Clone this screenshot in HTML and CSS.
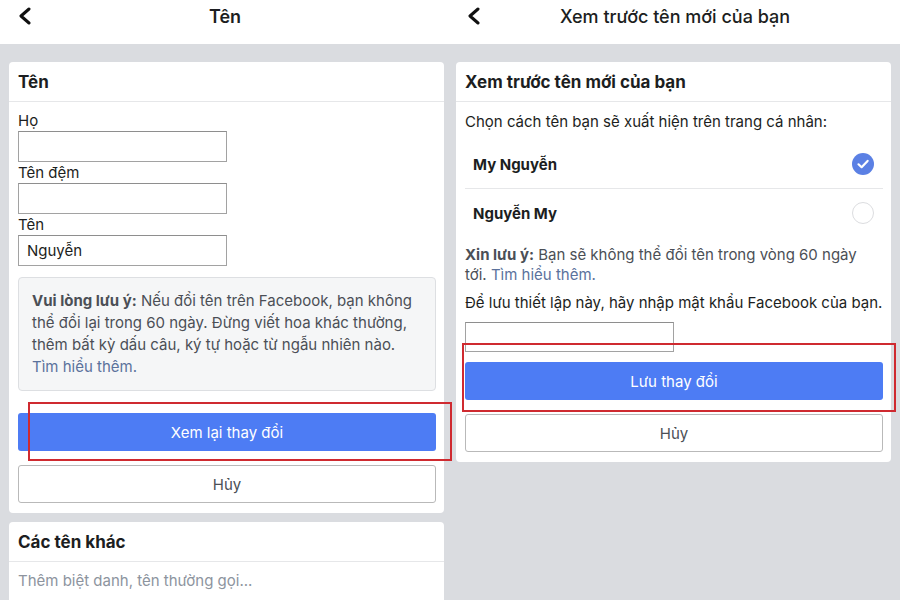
FILE: index.html
```html
<!DOCTYPE html>
<html lang="vi">
  <head>
    <meta charset="UTF-8" />
    <meta name="viewport" content="width=device-width, initial-scale=1.0" />
    <title>Đổi tên</title>
    <link rel="stylesheet" href="styles.css">
  </head>
  <body>
    <!-- màn hình 1: sửa tên -->
    <div class="screen screen-left">
      <div class="topbar">
        <svg class="back" width="14" height="18" viewBox="0 0 14 18"><path d="M11 2 L3 9 L11 16" fill="none" stroke="#111" stroke-width="3" stroke-linecap="round" stroke-linejoin="round"/></svg>
        <div class="title">Tên</div>
      </div>
      <div class="content">
        <div class="card">
          <div class="card-header">Tên</div>
          <div class="card-body">
            <label class="field-label">Họ</label>
            <input class="field" type="text" value="">
            <label class="field-label">Tên đệm</label>
            <input class="field" type="text" value="">
            <label class="field-label">Tên</label>
            <input class="field" type="text" value="Nguyễn">

            <div class="note">
              <strong>Vui lòng lưu ý:</strong> Nếu đổi tên trên Facebook, bạn không<br>
              thể đổi lại trong 60 ngày. Đừng viết hoa khác thường,<br>
              thêm bất kỳ dấu câu, ký tự hoặc từ ngẫu nhiên nào.<br>
              <a href="#" class="link">Tìm hiểu thêm.</a>
            </div>

            <button class="btn btn-primary btn-review">Xem lại thay đổi</button>
            <button class="btn btn-cancel">Hủy</button>
          </div>
        </div>

        <div class="card card-other">
          <div class="card-header">Các tên khác</div>
          <div class="placeholder">Thêm biệt danh, tên thường gọi...</div>
        </div>
      </div>
    </div>

    <!-- màn hình 2: xem trước -->
    <div class="screen screen-right">
      <div class="topbar">
        <svg class="back" width="14" height="18" viewBox="0 0 14 18"><path d="M11 2 L3 9 L11 16" fill="none" stroke="#111" stroke-width="3" stroke-linecap="round" stroke-linejoin="round"/></svg>
        <div class="title title-light">Xem trước tên mới của bạn</div>
      </div>
      <div class="content">
        <div class="card">
          <div class="card-header">Xem trước tên mới của bạn</div>
          <div class="card-body">
            <div class="intro">Chọn cách tên bạn sẽ xuất hiện trên trang cá nhân:</div>
            <div class="option option-first">
              <span>My Nguyễn</span>
              <svg class="radio" width="22" height="22" viewBox="0 0 22 22"><circle cx="11" cy="11" r="11" fill="#5b80e4"/><path d="M6.5 11.3 L9.6 14.2 L15.6 7.9" fill="none" stroke="#fff" stroke-width="2.2" stroke-linecap="round" stroke-linejoin="round"/></svg>
            </div>
            <div class="option option-last">
              <span>Nguyễn My</span>
              <span class="radio radio-empty"></span>
            </div>
            <div class="hint">
              <strong>Xin lưu ý:</strong> Bạn sẽ không thể đổi tên trong vòng 60 ngày<br>
              tới. <a href="#" class="link">Tìm hiểu thêm.</a>
            </div>
            <div class="intro pw-label">Để lưu thiết lập này, hãy nhập mật khẩu Facebook của bạn.</div>
            <input class="field field-pw" type="password" value="">
            <button class="btn btn-primary btn-save">Lưu thay đổi</button>
            <button class="btn btn-cancel">Hủy</button>
          </div>
        </div>
      </div>
    </div>

    <!-- khung đỏ đánh dấu -->
    <div class="mark mark-left"></div>
    <div class="mark mark-right"></div>
  </body>
</html>
```

FILE: styles.css
```css
body {
  font-family: Inter, Roboto, 'Noto Sans', sans-serif;
  background-color: #dadce0;
  margin: 0;
  width: 900px;
  height: 600px;
  overflow: hidden;
  display: flex;
  color: #1c1e21;
  position: relative;
}
.screen {
  width: 450px;
  display: flex;
  flex-direction: column;
}
.topbar {
  height: 44px;
  flex-shrink: 0;
  background-color: white;
  display: flex;
  align-items: center;
  justify-content: center;
  position: relative;
}
.back {
  position: absolute;
  left: 18px;
  top: 7px;
}
.screen-right .back {
  left: 17px;
}
.title {
  font-size: 18px;
  font-weight: 600;
  margin-top: -12px;
}
.title-light {
  font-weight: 500;
}
.content {
  padding-top: 18px;
}
.screen-left .content {
  padding-left: 9px;
  padding-right: 6px;
}
.screen-right .content {
  padding-left: 6px;
  padding-right: 9px;
}
.card {
  background-color: white;
  border-radius: 4px;
}
.card-header {
  height: 39px;
  line-height: 41px;
  padding: 0 9px;
  font-size: 17px;
  font-weight: 700;
  border-bottom: 1px solid #e6e7e9;
}
.card-body {
  padding: 8px 8px 10px 9px;
  display: flex;
  flex-direction: column;
}
.field-label {
  font-size: 15px;
  line-height: 21px;
  color: #1c1e21;
}
.field {
  width: 209px;
  height: 31px;
  box-sizing: border-box;
  border: 1px solid #a2a2a2;
  border-top-color: #8e8e8e;
  border-radius: 0;
  padding: 0 8px;
  font-family: inherit;
  font-size: 15px;
  color: #1c1e21;
  margin: 0;
}
.note {
  margin-top: 11px;
  background-color: #f5f6f7;
  border: 1px solid #dddfe2;
  border-radius: 4px;
  padding: 12px 13px;
  font-size: 15px;
  line-height: 22px;
  color: #4b4f56;
  white-space: nowrap;
}
.note strong,
.hint strong {
  color: #4b4f56;
}
.link {
  color: #5b729c;
  text-decoration: none;
}
.btn {
  width: 100%;
  height: 38px;
  border-radius: 3px;
  font-family: inherit;
  font-size: 15px;
  cursor: pointer;
}
.btn-primary {
  background-color: #4d7cf4;
  border: none;
  color: white;
}
.btn-review {
  margin-top: 22px;
}
.btn-cancel {
  margin-top: 14px;
  background-color: white;
  border: 1px solid #b9b9b9;
  color: #4b4f56;
}
.card-other {
  margin-top: 9px;
  height: 90px;
}
.placeholder {
  padding: 0 9px;
  line-height: 38px;
  font-size: 15px;
  color: #8d949e;
}
.intro {
  font-size: 15px;
  line-height: 20px;
  padding-top: 2px;
  white-space: nowrap;
}
.option {
  height: 48px;
  display: flex;
  align-items: center;
  justify-content: space-between;
  padding: 0 9px 0 8px;
  font-size: 15px;
  font-weight: 700;
  border-bottom: 1px solid #e6e7e9;
}
.option-first {
  margin-top: 8px;
}
.option-last {
  border-bottom: none;
}
.radio {
  display: block;
  width: 22px;
  height: 22px;
}
.radio-empty {
  box-sizing: border-box;
  border: 1px solid #dcdde0;
  border-radius: 50%;
}
.hint {
  margin-top: 8px;
  font-size: 15px;
  line-height: 20px;
  color: #4b4f56;
  white-space: nowrap;
}
.pw-label {
  margin-top: 6px;
}
.field-pw {
  margin-top: 9px;
  height: 30px;
}
.btn-save {
  margin-top: 10px;
}
.mark {
  position: absolute;
  border: 2px solid #cf2a30;
  box-sizing: border-box;
}
.mark-left {
  left: 28px;
  top: 402px;
  width: 424px;
  height: 59px;
}
.mark-right {
  left: 462px;
  top: 343px;
  width: 434px;
  height: 69px;
}
```
